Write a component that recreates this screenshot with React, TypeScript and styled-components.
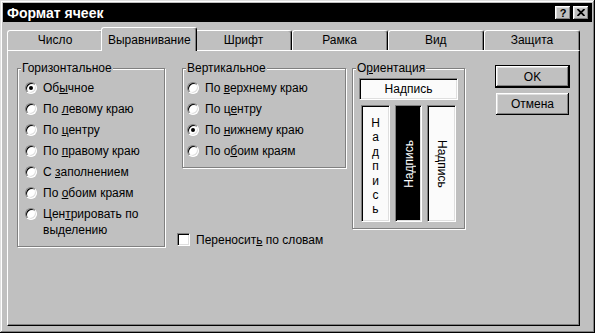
import React from 'react';
import styled, { createGlobalStyle } from 'styled-components';

const GlobalStyle = createGlobalStyle`
  html, body {
    margin: 0;
    padding: 0;
    background: #c0c0c0;
  }
  body {
    font-family: "Liberation Sans", Arial, sans-serif;
    font-size: 12px;
    color: #000;
  }
`;

const Window = styled.div`
  box-sizing: border-box;
  width: 595px;
  height: 333px;
  padding: 3px;
  display: flex;
  flex-direction: column;
  background: #c0c0c0;
  box-shadow: inset -1px -1px #000, inset 1px 1px #dfdfdf, inset -2px -2px #808080, inset 2px 2px #fff;
`;

const TitleBar = styled.div`
  flex: none;
  height: 19px;
  display: flex;
  align-items: center;
  justify-content: space-between;
  padding: 0 3px 0 4px;
  background: #000;
  color: #fff;
  font-weight: bold;
  font-size: 14px;
`;

const TitleButtons = styled.div`
  display: flex;
  gap: 2px;
`;

const TitleButton = styled.div`
  box-sizing: border-box;
  width: 16px;
  height: 14px;
  display: flex;
  align-items: center;
  justify-content: center;
  background: #c0c0c0;
  color: #000;
  font-size: 11px;
  font-weight: bold;
  box-shadow: inset -1px -1px #000, inset 1px 1px #fff, inset -2px -2px #808080, inset 2px 2px #dfdfdf;
`;

const Body = styled.div`
  flex: 1;
  min-height: 0;
  display: flex;
  flex-direction: column;
  padding: 5px 12px 4px 4px;
`;

const TabStrip = styled.div`
  flex: none;
  height: 23px;
  display: flex;
  align-items: flex-end;
`;

const Tab = styled.div<{ $active?: boolean }>`
  flex: 1 1 0;
  box-sizing: border-box;
  height: ${(p) => (p.$active ? 24 : 20)}px;
  margin: ${(p) => (p.$active ? '0 -2px -1px' : '0')};
  padding-top: ${(p) => (p.$active ? 3 : 0)}px;
  position: relative;
  z-index: ${(p) => (p.$active ? 1 : 0)};
  border-top: 1px solid #fff;
  border-left: 1px solid #fff;
  border-right: 1px solid #000;
  border-radius: 3px 3px 0 0;
  box-shadow: inset -1px 0 #808080;
  background: #c0c0c0;
  text-align: center;
  line-height: 18px;
`;

const Panel = styled.div`
  flex: 1;
  box-sizing: border-box;
  display: flex;
  align-items: flex-start;
  padding: 10px 0 0 9px;
  border: 1px solid;
  border-color: #fff #000 #000 #fff;
  box-shadow: inset -1px -1px #808080;
`;

const Group = styled.fieldset<{ $width: number }>`
  box-sizing: border-box;
  width: ${(p) => p.$width}px;
  min-inline-size: 0;
  margin: 0;
  padding: 0;
  border: 1px solid #808080;
  box-shadow: inset 1px 1px #fff, 1px 1px #fff;
`;

const Legend = styled.legend`
  margin-left: 3px;
  padding: 0 1px;
  line-height: 14px;
  background: #c0c0c0;
`;

const Options = styled.div<{ $inset: number }>`
  display: flex;
  flex-direction: column;
  padding: 3px 6px 5px ${(p) => p.$inset}px;
`;

const OptionRow = styled.label`
  display: flex;
  align-items: flex-start;
  gap: 6px;
  padding: 2px 0 3px;
  line-height: 16px;
`;

const OptionText = styled.span`
  display: flex;
  flex-direction: column;
`;

const Radio = styled.span<{ $checked?: boolean }>`
  flex: none;
  box-sizing: border-box;
  position: relative;
  width: 12px;
  height: 12px;
  margin-top: 2px;
  border-radius: 50%;
  border: 1px solid;
  border-color: #808080 #fff #fff #808080;
  box-shadow: inset 1px 1px #000, inset -1px -1px #dfdfdf;
  background: #fff;

  &::after {
    content: '';
    display: ${(p) => (p.$checked ? 'block' : 'none')};
    position: absolute;
    left: 3px;
    top: 3px;
    width: 4px;
    height: 4px;
    border-radius: 50%;
    background: #000;
  }
`;

const Key = styled.u`
  text-decoration: underline;
  text-underline-offset: 1px;
`;

const MiddleColumn = styled.div`
  margin-left: 17px;
  display: flex;
  flex-direction: column;
`;

const CheckRow = styled.label`
  display: flex;
  align-items: flex-start;
  gap: 6px;
  margin: 64px 0 0 -5px;
  line-height: 16px;
`;

const CheckBox = styled.span`
  flex: none;
  box-sizing: border-box;
  width: 13px;
  height: 13px;
  margin-top: 1px;
  border: 1px solid;
  border-color: #808080 #fff #fff #808080;
  box-shadow: inset 1px 1px #000, inset -1px -1px #dfdfdf;
  background: #fff;
`;

const OrientationGroup = styled(Group)`
  margin-left: 6px;
`;

const OrientationBody = styled.div`
  display: flex;
  flex-direction: column;
  padding: 3px 6px 6px;
`;

const Sunken = styled.div<{ $dark?: boolean }>`
  box-sizing: border-box;
  border: 1px solid;
  border-color: #808080 #fff #fff #808080;
  box-shadow: inset 1px 1px #000, inset -1px -1px #dfdfdf;
  background: ${(p) => (p.$dark ? '#000' : '#fbfbfb')};
  color: ${(p) => (p.$dark ? '#fff' : '#000')};
`;

const HorizontalSample = styled(Sunken)`
  height: 22px;
  line-height: 20px;
  text-align: center;
`;

const SampleRow = styled.div`
  margin-top: 5px;
  height: 117px;
  display: flex;
  justify-content: space-between;
  padding: 0 2px;
`;

const SampleColumn = styled(Sunken)<{ $width: number }>`
  width: ${(p) => p.$width}px;
  height: 100%;
  display: flex;
  flex-direction: column;
  align-items: center;
`;

const StackedLetters = styled.div`
  display: flex;
  flex-direction: column;
  align-items: center;
  padding-top: 10px;
  line-height: 14.4px;
`;

const RotatedText = styled.div<{ $upward?: boolean }>`
  margin: auto 0;
  writing-mode: vertical-rl;
  line-height: 16px;
  transform: ${(p) => (p.$upward ? 'rotate(180deg)' : 'none')};
`;

const ButtonColumn = styled.div`
  margin: 4px 0 0 30px;
  display: flex;
  flex-direction: column;
  gap: 4px;
`;

const Button = styled.div<{ $default?: boolean; $height: number }>`
  box-sizing: border-box;
  width: 75px;
  height: ${(p) => p.$height}px;
  display: flex;
  align-items: center;
  justify-content: center;
  border: 1px solid ${(p) => (p.$default ? '#000' : 'transparent')};
  background: #c0c0c0;
  box-shadow: inset -1px -1px #000, inset 1px 1px #fff, inset -2px -2px #808080, inset 2px 2px #dfdfdf;
`;

const CloseGlyph = () => (
  <svg width="8" height="7" viewBox="0 0 8 7">
    <path d="M0.5 0 L7.5 7 M7.5 0 L0.5 7" stroke="#000" strokeWidth="1.8" />
  </svg>
);

type Option = { before: string; key: string; after: string; next?: string; checked?: boolean };

const horizontal: Option[] = [
  { before: 'Об', key: 'ы', after: 'чное', checked: true },
  { before: 'По ', key: 'л', after: 'евому краю' },
  { before: 'По ', key: 'ц', after: 'ентру' },
  { before: 'По ', key: 'п', after: 'равому краю' },
  { before: 'С ', key: 'з', after: 'аполнением' },
  { before: 'По ', key: 'о', after: 'боим краям' },
  { before: 'Цен', key: 'т', after: 'рировать по', next: 'выделению' },
];

const vertical: Option[] = [
  { before: 'По ', key: 'в', after: 'ерхнему краю' },
  { before: 'По ц', key: 'е', after: 'нтру' },
  { before: 'По ', key: 'н', after: 'ижнему краю', checked: true },
  { before: 'По о', key: 'б', after: 'оим краям' },
];

const tabs = ['Число', 'Выравнивание', 'Шрифт', 'Рамка', 'Вид', 'Защита'];

const OptionList: React.FC<{ items: Option[]; inset: number }> = ({ items, inset }) => (
  <Options $inset={inset}>
    {items.map((o) => (
      <OptionRow key={o.before + o.key + o.after}>
        <Radio $checked={o.checked} />
        <OptionText>
          <span>
            {o.before}
            <Key>{o.key}</Key>
            {o.after}
          </span>
          {o.next && <span>{o.next}</span>}
        </OptionText>
      </OptionRow>
    ))}
  </Options>
);

const App: React.FC = () => {
  return (
    <>
      <GlobalStyle />
      <Window>
        <TitleBar>
          <span>Формат ячеек</span>
          <TitleButtons>
            <TitleButton>?</TitleButton>
            <TitleButton>
              <CloseGlyph />
            </TitleButton>
          </TitleButtons>
        </TitleBar>
        <Body>
          <TabStrip>
            {tabs.map((t) => (
              <Tab key={t} $active={t === 'Выравнивание'}>
                {t}
              </Tab>
            ))}
          </TabStrip>
          <Panel>
            <Group $width={148}>
              <Legend>Горизонтальное</Legend>
              <OptionList items={horizontal} inset={7} />
            </Group>
            <MiddleColumn>
              <Group $width={164}>
                <Legend>Вертикальное</Legend>
                <OptionList items={vertical} inset={4} />
              </Group>
              <CheckRow>
                <CheckBox />
                <span>
                  Переносит<Key>ь</Key> по словам
                </span>
              </CheckRow>
            </MiddleColumn>
            <OrientationGroup $width={113}>
              <Legend>
                О<Key>р</Key>иентация
              </Legend>
              <OrientationBody>
                <HorizontalSample>Надпись</HorizontalSample>
                <SampleRow>
                  <SampleColumn $width={29}>
                    <StackedLetters>
                      {'Надпись'.split('').map((c, i) => (
                        <span key={i}>{c}</span>
                      ))}
                    </StackedLetters>
                  </SampleColumn>
                  <SampleColumn $width={27} $dark>
                    <RotatedText $upward>Надпись</RotatedText>
                  </SampleColumn>
                  <SampleColumn $width={29}>
                    <RotatedText>Надпись</RotatedText>
                  </SampleColumn>
                </SampleRow>
              </OrientationBody>
            </OrientationGroup>
            <ButtonColumn>
              <Button $default $height={23}>OK</Button>
              <Button $height={24}>Отмена</Button>
            </ButtonColumn>
          </Panel>
        </Body>
      </Window>
    </>
  );
};

export default App;
